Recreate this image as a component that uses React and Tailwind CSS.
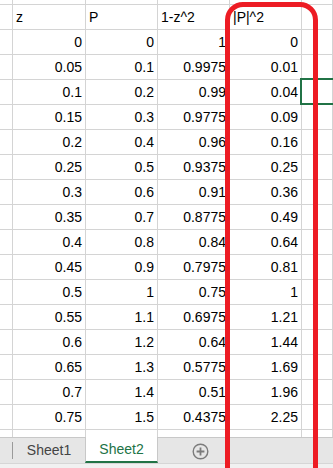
import React from 'react';

const rows = [
  ['0', '0', '1', '0'],
  ['0.05', '0.1', '0.9975', '0.01'],
  ['0.1', '0.2', '0.99', '0.04'],
  ['0.15', '0.3', '0.9775', '0.09'],
  ['0.2', '0.4', '0.96', '0.16'],
  ['0.25', '0.5', '0.9375', '0.25'],
  ['0.3', '0.6', '0.91', '0.36'],
  ['0.35', '0.7', '0.8775', '0.49'],
  ['0.4', '0.8', '0.84', '0.64'],
  ['0.45', '0.9', '0.7975', '0.81'],
  ['0.5', '1', '0.75', '1'],
  ['0.55', '1.1', '0.6975', '1.21'],
  ['0.6', '1.2', '0.64', '1.44'],
  ['0.65', '1.3', '0.5775', '1.69'],
  ['0.7', '1.4', '0.51', '1.96'],
  ['0.75', '1.5', '0.4375', '2.25'],
  ['0.8', '1.6', '0.36', '2.56'],
];

const cell = 'border-r border-b border-[#d4d4d4] px-[3px] flex items-center overflow-hidden whitespace-nowrap';
const cols = 'grid grid-cols-[13px_73px_72px_72px_72px_1fr]';

function Row({ values, header, className = 'h-[25px]' }) {
  return (
    <div className={`${cols} ${className}`}>
      <div className={cell} />
      {values.map((v, i) => (
        <div key={i} className={`${cell} ${header ? 'justify-start' : 'justify-end'}`}>
          {v}
        </div>
      ))}
      <div className={cell} />
    </div>
  );
}

function PlusCircle() {
  return (
    <svg width="17" height="17" viewBox="0 0 17 17" fill="none" stroke="#7b7b7b" strokeWidth="1.4">
      <circle cx="8.5" cy="8.5" r="7.3" />
      <path d="M8.5 4.6v7.8M4.6 8.5h7.8" strokeWidth="1.8" />
    </svg>
  );
}

export default function App() {
  return (
    <div className="relative w-[333px] h-[468px] overflow-hidden bg-white text-[14px] text-black font-['Liberation_Sans',Arial,sans-serif]">
      <div className="h-[437px] overflow-hidden">
        <Row values={['', '', '', '']} className="h-[5px]" />
        <Row values={['z', 'P', '1-z^2', '|P|^2']} header />
        {rows.map((r, i) => (
          <Row key={i} values={r} />
        ))}
      </div>

      {/* sheet tabs */}
      <div className="flex flex-col h-[31px]">
        <div className="flex h-[26px] bg-[#e6e6e6] border-t border-[#c8c8c8]">
          <div className="w-[13px] flex items-center justify-end">
            <div className="w-px h-[17px] bg-[#9a9a9a]" />
          </div>
          <div className="w-[72px] flex items-center justify-center text-[#444]">Sheet1</div>
          <div className="w-[73px] -mt-px h-[26px] bg-white border-x border-[#c8c8c8] border-b-2 border-b-[#217346] flex items-center justify-center text-[#217346]">
            Sheet2
          </div>
          <div className="w-[84px] flex items-center justify-center pt-px">
            <PlusCircle />
          </div>
        </div>
        <div className="flex-1 bg-[#f1f1f1] border-t border-[#d6d6d6]" />
      </div>

      {/* selected cell */}
      <div className="absolute left-[300px] top-[78px] w-[40px] h-[27px] border-2 border-[#217346]" />

      {/* red highlight */}
      <div className="absolute left-[225px] top-[2px] w-[93px] h-[520px] border-[5px] border-[#ed1c24] rounded-[18px]" />
    </div>
  );
}
